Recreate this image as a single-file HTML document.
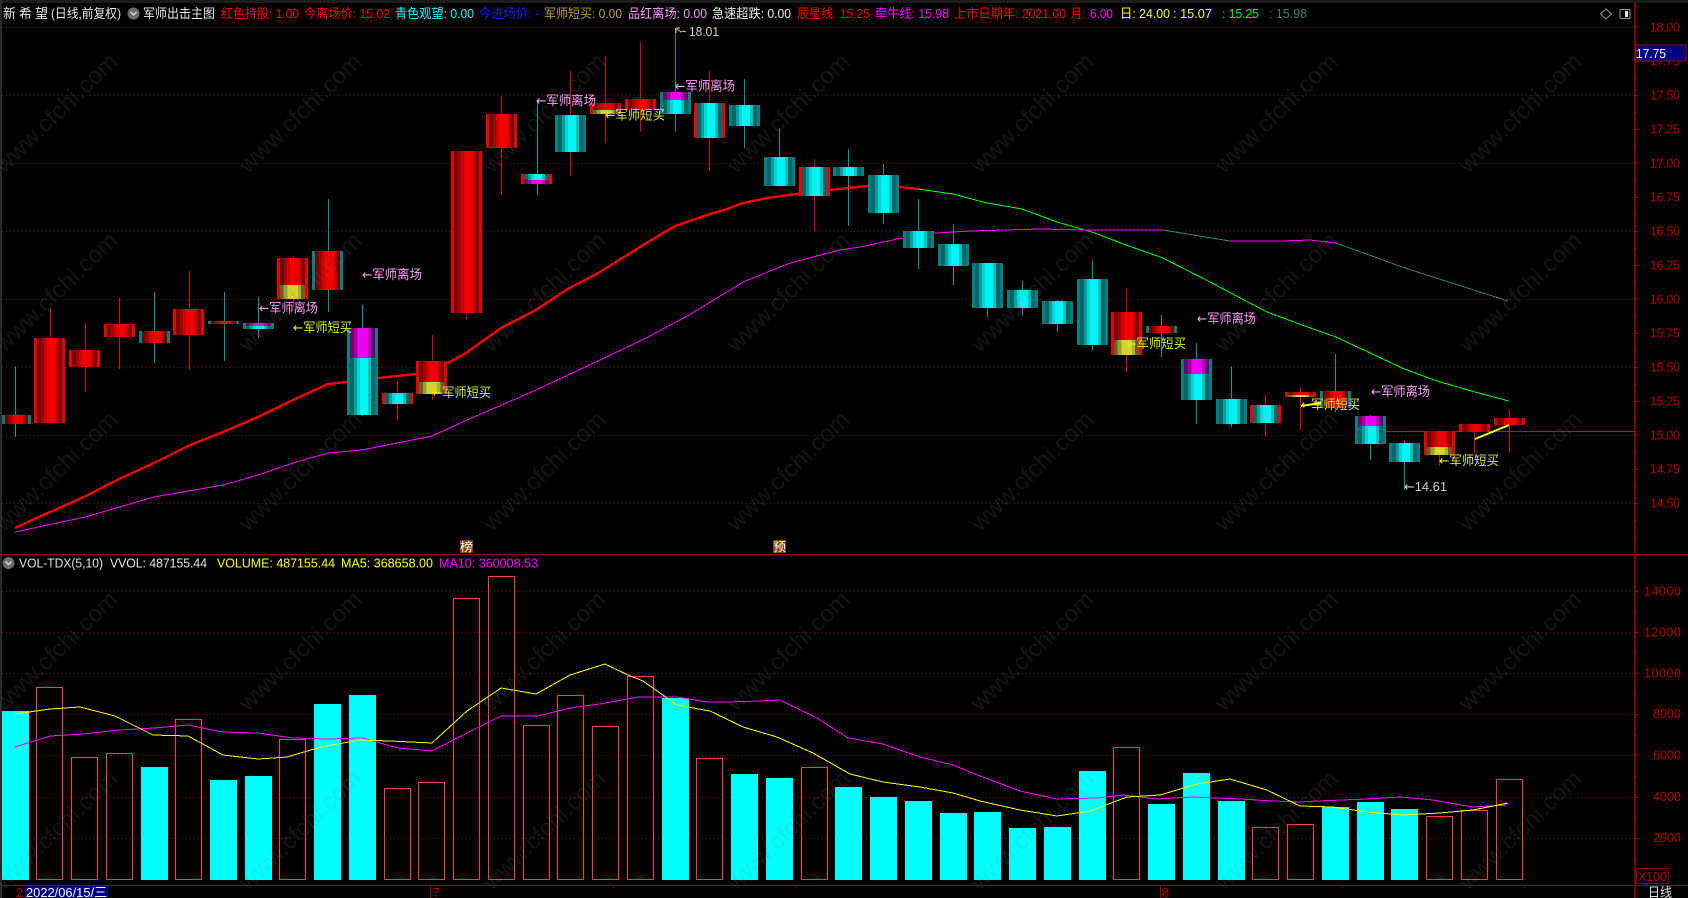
<!DOCTYPE html>
<html lang="zh">
<head>
<meta charset="utf-8">
<title>新希望 日线</title>
<style>
html,body{margin:0;padding:0;background:#000;width:1688px;height:898px;overflow:hidden}
svg{display:block;position:absolute;left:0;top:0}
text{font-family:"Liberation Sans","Noto Sans CJK SC",sans-serif;font-size:13px;white-space:pre}
.ar{font-family:"DejaVu Sans",sans-serif}
.ax{font-size:12.5px;fill:#b80000}
.ml{fill:#ff9cff}
.dl{fill:#d8f030}
.wm{font-size:24px;fill:rgba(128,128,128,.16);text-anchor:middle}
.g{stroke:#a00000;stroke-width:1;stroke-dasharray:1 3;fill:none;shape-rendering:crispEdges}
.l{fill:none;shape-rendering:crispEdges}
.c{fill:#00ffff}
.h{fill:none;stroke:#ff4040;stroke-width:1}
.r{shape-rendering:crispEdges}
</style>
</head>
<body>
<svg width="1688" height="898" viewBox="0 0 1688 898" xmlns="http://www.w3.org/2000/svg">
<defs>
<linearGradient id="gR"><stop offset="0" stop-color="#e80000"/><stop offset=".1" stop-color="#e80000"/><stop offset=".1" stop-color="#700000"/><stop offset=".22" stop-color="#700000"/><stop offset=".22" stop-color="#a00000"/><stop offset=".32" stop-color="#a00000"/><stop offset=".32" stop-color="#d00000"/><stop offset=".42" stop-color="#d00000"/><stop offset=".42" stop-color="#f00000"/><stop offset=".72" stop-color="#f00000"/><stop offset=".72" stop-color="#b00000"/><stop offset=".8" stop-color="#b00000"/><stop offset=".8" stop-color="#700000"/><stop offset=".9" stop-color="#700000"/><stop offset=".9" stop-color="#e80000"/><stop offset="1" stop-color="#e80000"/></linearGradient>
<linearGradient id="gT"><stop offset="0" stop-color="#008080"/><stop offset=".1" stop-color="#008080"/><stop offset=".1" stop-color="#700000"/><stop offset=".22" stop-color="#700000"/><stop offset=".22" stop-color="#a00000"/><stop offset=".32" stop-color="#a00000"/><stop offset=".32" stop-color="#d00000"/><stop offset=".42" stop-color="#d00000"/><stop offset=".42" stop-color="#f00000"/><stop offset=".72" stop-color="#f00000"/><stop offset=".72" stop-color="#b00000"/><stop offset=".8" stop-color="#b00000"/><stop offset=".8" stop-color="#700000"/><stop offset=".9" stop-color="#700000"/><stop offset=".9" stop-color="#008080"/><stop offset="1" stop-color="#008080"/></linearGradient>
<linearGradient id="gC"><stop offset="0" stop-color="#008080"/><stop offset=".1" stop-color="#008080"/><stop offset=".1" stop-color="#006666"/><stop offset=".22" stop-color="#006666"/><stop offset=".22" stop-color="#00a0a0"/><stop offset=".32" stop-color="#00a0a0"/><stop offset=".32" stop-color="#00d8d8"/><stop offset=".42" stop-color="#00d8d8"/><stop offset=".42" stop-color="#00f4f4"/><stop offset=".68" stop-color="#00f4f4"/><stop offset=".68" stop-color="#00c0c0"/><stop offset=".78" stop-color="#00c0c0"/><stop offset=".78" stop-color="#006666"/><stop offset=".9" stop-color="#006666"/><stop offset=".9" stop-color="#008080"/><stop offset="1" stop-color="#008080"/></linearGradient>
<linearGradient id="gX"><stop offset="0" stop-color="#ee0000"/><stop offset=".1" stop-color="#ee0000"/><stop offset=".1" stop-color="#006666"/><stop offset=".22" stop-color="#006666"/><stop offset=".22" stop-color="#00a0a0"/><stop offset=".32" stop-color="#00a0a0"/><stop offset=".32" stop-color="#00d8d8"/><stop offset=".42" stop-color="#00d8d8"/><stop offset=".42" stop-color="#00f4f4"/><stop offset=".68" stop-color="#00f4f4"/><stop offset=".68" stop-color="#00c0c0"/><stop offset=".78" stop-color="#00c0c0"/><stop offset=".78" stop-color="#006666"/><stop offset=".9" stop-color="#006666"/><stop offset=".9" stop-color="#ee0000"/><stop offset="1" stop-color="#ee0000"/></linearGradient>
<linearGradient id="gM"><stop offset="0" stop-color="#700070"/><stop offset=".15" stop-color="#700070"/><stop offset=".15" stop-color="#a000a0"/><stop offset=".3" stop-color="#a000a0"/><stop offset=".3" stop-color="#f000f0"/><stop offset=".72" stop-color="#f000f0"/><stop offset=".72" stop-color="#b000b0"/><stop offset=".85" stop-color="#b000b0"/><stop offset=".85" stop-color="#700070"/><stop offset="1" stop-color="#700070"/></linearGradient>
<linearGradient id="gY"><stop offset="0" stop-color="#606030"/><stop offset=".15" stop-color="#606030"/><stop offset=".15" stop-color="#a0a030"/><stop offset=".3" stop-color="#a0a030"/><stop offset=".3" stop-color="#d4d42c"/><stop offset=".72" stop-color="#d4d42c"/><stop offset=".72" stop-color="#b0b030"/><stop offset=".85" stop-color="#b0b030"/><stop offset=".85" stop-color="#606030"/><stop offset="1" stop-color="#606030"/></linearGradient>
</defs>

<!-- frame -->
<rect x="0" y="0" width="1688" height="3" fill="#1c1c1c"/>
<rect x="0" y="0" width="2" height="898" fill="#2a2a2a"/>

<!-- main grid -->
<path class="g" d="M2 27.5H1634M2 95.5H1634M2 163.5H1634M2 231.5H1634M2 299.5H1634M2 367.5H1634M2 435.5H1634M2 503.5H1634"/>
<!-- volume grid -->
<path class="g" d="M2 591.5H1634M2 632.5H1634M2 673.5H1634M2 714.5H1634M2 755.5H1634M2 797.5H1634M2 838.5H1634"/>

<!-- MA lines main -->
<polyline class="l" stroke="#ff0000" stroke-width="2.4" points="15,528 50,512 84,497 119,479 154,463 188,446 223,432 258,417 293,400 328,384 346,382 378,378 416,374 448,363 466,353 501,328 536,310 566,290 600,272 640,247 675,226 710,214 727,209 743,203 767,198 797,194 830,190 867,186 900,187 918,189"/>
<polyline class="l" stroke="#00ff00" stroke-width="1" points="918,189 953,194 987,203 1022,209 1057,222 1092,232 1126,245 1163,258 1210,282 1267,312 1299,324 1336,337 1366,351 1402,368 1437,381 1475,392 1509,401"/>
<polyline class="l" stroke="#ff00ff" stroke-width="1" points="15,532 85,517 154,497 223,485 258,475 293,463 328,453 362,450 397,443 432,436 467,420 497,407 536,390 600,360 646,338 689,315 743,282 790,263 840,250 860,247 902,238 936,233 970,231 1040,229 1087,230 1163,230"/>
<polyline class="l" stroke="#2e8b57" stroke-width="1" points="1163,230 1230,241"/>
<polyline class="l" stroke="#ff00ff" stroke-width="1" points="1230,241 1283,241 1310,240 1336,243"/>
<polyline class="l" stroke="#2e8b57" stroke-width="1" points="1336,243 1405,268 1508,301"/>

<!-- red 15.00 price line -->
<rect class="r" x="1386" y="431" width="248" height="1" fill="#e00000"/>

<!-- wicks -->
<path class="r" stroke="#e00000" fill="none" d="M50.5 308V338M85.5 323V392M119.5 298V369M189.5 271V370M293.5 256V307M397.5 381V420M432.5 335V400M466.5 151V320M501.5 96V195M570.5 71V176M605.5 56V143M640.5 42V132M709.5 71V171M814.5 159V231M1126.5 288V372M1265.5 395V437M1300.5 387V430M1439.5 430V466M1474.5 424V454M1509.5 410V452"/>
<path class="r" stroke="#009a9a" fill="none" d="M15.5 366V437M154.5 292V363M224.5 292V361M258.5 297V338M328.5 199V312M362.5 305V416M537.5 100V195M675.5 28V132M744.5 79V148M779.5 128V186M848.5 149V226M883.5 164V224M918.5 199V269M953.5 224V285M987.5 263V317M1022.5 281V315M1057.5 300V332M1092.5 260V350M1161.5 315V357M1196.5 343V424M1231.5 366V427M1335.5 354V412M1370.5 415V460M1404.5 441V490"/>

<!-- candle bodies -->
<g class="r">
<rect x="2" y="415" width="29" height="9" fill="url(#gT)"/>
<rect x="34" y="338" width="31" height="85" fill="url(#gR)"/>
<rect x="69" y="350" width="31" height="17" fill="url(#gR)"/>
<rect x="104" y="324" width="31" height="13" fill="url(#gR)"/>
<rect x="139" y="331" width="31" height="12" fill="url(#gT)"/>
<rect x="173" y="309" width="31" height="26" fill="url(#gR)"/>
<rect x="208" y="321" width="31" height="3" fill="url(#gT)"/>
<rect x="243" y="323" width="31" height="6" fill="url(#gC)"/><rect x="246" y="323" width="25" height="3" fill="url(#gM)"/>
<rect x="277" y="258" width="31" height="41" fill="url(#gR)"/><rect x="280" y="285" width="25" height="14" fill="url(#gY)"/>
<rect x="312" y="251" width="31" height="39" fill="url(#gT)"/>
<rect x="347" y="328" width="31" height="87" fill="url(#gC)"/><rect x="350" y="328" width="25" height="30" fill="url(#gM)"/>
<rect x="382" y="393" width="31" height="11" fill="url(#gX)"/>
<rect x="416" y="361" width="31" height="33" fill="url(#gR)"/><rect x="419" y="382" width="25" height="12" fill="url(#gY)"/>
<rect x="451" y="151" width="31" height="162" fill="url(#gR)"/>
<rect x="486" y="114" width="31" height="34" fill="url(#gR)"/>
<rect x="521" y="174" width="31" height="10" fill="url(#gX)"/><rect x="524" y="180" width="25" height="4" fill="url(#gM)"/>
<rect x="555" y="115" width="31" height="37" fill="url(#gC)"/>
<rect x="590" y="103" width="31" height="11" fill="url(#gR)"/><rect x="593" y="110" width="25" height="4" fill="url(#gY)"/>
<rect x="625" y="99" width="31" height="11" fill="url(#gR)"/>
<rect x="660" y="92" width="31" height="22" fill="url(#gC)"/><rect x="663" y="92" width="25" height="8" fill="url(#gM)"/>
<rect x="694" y="103" width="31" height="35" fill="url(#gX)"/>
<rect x="729" y="105" width="31" height="21" fill="url(#gC)"/>
<rect x="764" y="157" width="31" height="29" fill="url(#gC)"/>
<rect x="799" y="167" width="31" height="29" fill="url(#gX)"/>
<rect x="833" y="167" width="31" height="9" fill="url(#gC)"/>
<rect x="868" y="175" width="31" height="38" fill="url(#gC)"/>
<rect x="903" y="231" width="31" height="17" fill="url(#gC)"/>
<rect x="938" y="244" width="31" height="22" fill="url(#gC)"/>
<rect x="972" y="263" width="31" height="45" fill="url(#gC)"/>
<rect x="1007" y="290" width="31" height="18" fill="url(#gC)"/>
<rect x="1042" y="301" width="31" height="23" fill="url(#gC)"/>
<rect x="1077" y="279" width="31" height="66" fill="url(#gC)"/>
<rect x="1111" y="312" width="31" height="43" fill="url(#gR)"/><rect x="1114" y="340" width="25" height="15" fill="url(#gY)"/>
<rect x="1146" y="326" width="31" height="7" fill="url(#gT)"/>
<rect x="1181" y="359" width="31" height="41" fill="url(#gC)"/><rect x="1184" y="359" width="25" height="15" fill="url(#gM)"/>
<rect x="1216" y="399" width="31" height="25" fill="url(#gC)"/>
<rect x="1250" y="405" width="31" height="18" fill="url(#gX)"/>
<rect x="1285" y="392" width="31" height="5" fill="url(#gR)"/><rect x="1288" y="395" width="25" height="2" fill="url(#gY)"/>
<rect x="1320" y="391" width="31" height="17" fill="url(#gT)"/>
<rect x="1355" y="416" width="31" height="28" fill="url(#gC)"/><rect x="1358" y="416" width="25" height="10" fill="url(#gM)"/>
<rect x="1389" y="443" width="31" height="19" fill="url(#gC)"/>
<rect x="1424" y="431" width="31" height="24" fill="url(#gR)"/><rect x="1427" y="447" width="25" height="8" fill="url(#gY)"/>
<rect x="1459" y="424" width="31" height="8" fill="url(#gR)"/>
<rect x="1494" y="418" width="31" height="7" fill="url(#gR)"/>
</g>

<!-- yellow short segments -->
<path d="M1475 439L1509 425" stroke="#ffff00" stroke-width="2" fill="none" class="r"/>
<path d="M1301 406L1321 403" stroke="#ffff00" stroke-width="2" fill="none" class="r"/>

<!-- chart annotations -->
<text class="ml" x="259" y="312.5" textLength="59" lengthAdjust="spacingAndGlyphs"><tspan class="ar">←</tspan>军师离场</text>
<text class="ml" x="362" y="279" textLength="60" lengthAdjust="spacingAndGlyphs"><tspan class="ar">←</tspan>军师离场</text>
<text class="ml" x="536" y="105" textLength="60" lengthAdjust="spacingAndGlyphs"><tspan class="ar">←</tspan>军师离场</text>
<text class="ml" x="675" y="90.5" textLength="60" lengthAdjust="spacingAndGlyphs"><tspan class="ar">←</tspan>军师离场</text>
<text class="ml" x="1197" y="323" textLength="59" lengthAdjust="spacingAndGlyphs"><tspan class="ar">←</tspan>军师离场</text>
<text class="ml" x="1371" y="396" textLength="59" lengthAdjust="spacingAndGlyphs"><tspan class="ar">←</tspan>军师离场</text>
<text class="dl" x="293" y="332" textLength="59" lengthAdjust="spacingAndGlyphs"><tspan class="ar">←</tspan>军师短买</text>
<text class="dl" x="432" y="397" textLength="59" lengthAdjust="spacingAndGlyphs"><tspan class="ar">←</tspan>军师短买</text>
<text class="dl" x="605" y="119.5" textLength="60" lengthAdjust="spacingAndGlyphs"><tspan class="ar">←</tspan>军师短买</text>
<text class="dl" x="1126" y="348" textLength="60" lengthAdjust="spacingAndGlyphs"><tspan class="ar">←</tspan>军师短买</text>
<text class="dl" x="1301" y="409" textLength="59" lengthAdjust="spacingAndGlyphs"><tspan class="ar">←</tspan>军师短买</text>
<text class="dl" x="1439" y="465" textLength="60" lengthAdjust="spacingAndGlyphs"><tspan class="ar">←</tspan>军师短买</text>
<text x="1404" y="491" fill="#d0d0d0" textLength="43" lengthAdjust="spacingAndGlyphs"><tspan class="ar">←</tspan>14.61</text>
<path d="M676 28h4M676 28v5M677 29l4 3 2-1 3 1" stroke="#c8c8c8" fill="none"/>
<text x="689" y="36" fill="#d0d0d0" textLength="30" lengthAdjust="spacingAndGlyphs">18.01</text>

<!-- top legend -->
<text x="3" y="18" fill="#e8e8e8" textLength="45" lengthAdjust="spacing">新 希 望</text>
<text x="51" y="18" fill="#e8e8e8" textLength="70" lengthAdjust="spacingAndGlyphs">(日线,前复权)</text>
<circle cx="133.500" cy="13.500" r="6" fill="#6e6e6e"/><path d="M130.500 12l3 3 3-3" stroke="#e0e0e0" stroke-width="1.300" fill="none"/>
<text x="143" y="18" fill="#e8e8e8" textLength="72" lengthAdjust="spacingAndGlyphs">军师出击主图</text>
<text x="221" y="18" fill="#ff0000" textLength="78" lengthAdjust="spacingAndGlyphs">红色持股: 1.00</text>
<text x="304" y="18" fill="#ff0000" textLength="86" lengthAdjust="spacingAndGlyphs">今离场价: 15.02</text>
<text x="395" y="18" fill="#00ffff" textLength="79" lengthAdjust="spacingAndGlyphs">青色观望: 0.00</text>
<text x="479" y="18" fill="#1a1aff" textLength="60" lengthAdjust="spacingAndGlyphs">今进场价: -</text>
<text x="544" y="18" fill="#b8a030" textLength="78" lengthAdjust="spacingAndGlyphs">军师短买: 0.00</text>
<text x="628" y="18" fill="#ff99ff" textLength="79" lengthAdjust="spacingAndGlyphs">品红离场: 0.00</text>
<text x="712" y="18" fill="#f0f0f0" textLength="79" lengthAdjust="spacingAndGlyphs">急速超跌: 0.00</text>
<text x="797" y="18" fill="#ff0000" textLength="73" lengthAdjust="spacingAndGlyphs">辰星线: 15.25</text>
<text x="875" y="18" fill="#ff00ff" textLength="74" lengthAdjust="spacingAndGlyphs">牵牛线: 15.98</text>
<text x="954" y="18" fill="#ff0000" textLength="112" lengthAdjust="spacingAndGlyphs">上市日期年: 2021.00</text>
<text x="1071" y="18" fill="#ff0000" textLength="14" lengthAdjust="spacingAndGlyphs">月:</text>
<text x="1090" y="18" fill="#ff00ff" textLength="23" lengthAdjust="spacingAndGlyphs">6.00</text>
<text x="1120" y="18" fill="#ffff00" textLength="50" lengthAdjust="spacingAndGlyphs">日: 24.00</text>
<text x="1173" y="18" fill="#ffff00" textLength="39" lengthAdjust="spacingAndGlyphs">: 15.07</text>
<text x="1222" y="18" fill="#00ff00" textLength="37" lengthAdjust="spacingAndGlyphs">: 15.25</text>
<text x="1269" y="18" fill="#2e8b57" textLength="38" lengthAdjust="spacingAndGlyphs">: 15.98</text>

<!-- top-right icons -->
<path d="M1606 9l5.500 5-5.500 5-5.500-5z" fill="none" stroke="#9a9a9a"/>
<rect x="1620" y="9.500" width="10" height="9" rx="1.500" fill="none" stroke="#9a9a9a"/>
<rect x="1625" y="11" width="3" height="6" fill="#e0e0e0"/>

<!-- volume bars -->
<g class="r">
<rect class="c" x="2" y="711" width="27" height="169"/>
<rect class="h" x="36.500" y="687.500" width="26" height="192"/>
<rect class="h" x="71.500" y="757.500" width="26" height="122"/>
<rect class="h" x="106.500" y="753.500" width="26" height="126"/>
<rect class="c" x="141" y="767" width="27" height="113"/>
<rect class="h" x="175.500" y="719.500" width="26" height="160"/>
<rect class="c" x="210" y="780" width="27" height="100"/>
<rect class="c" x="245" y="776" width="27" height="104"/>
<rect class="h" x="279.500" y="739.500" width="26" height="140"/>
<rect class="c" x="314" y="704" width="27" height="176"/>
<rect class="c" x="349" y="695" width="27" height="185"/>
<rect class="h" x="384.500" y="788.500" width="26" height="91"/>
<rect class="h" x="418.500" y="782.500" width="26" height="97"/>
<rect class="h" x="453.500" y="598.500" width="26" height="281"/>
<rect class="h" x="488.500" y="576.500" width="26" height="303"/>
<rect class="h" x="523.500" y="725.500" width="26" height="154"/>
<rect class="h" x="557.500" y="695.500" width="26" height="184"/>
<rect class="h" x="592.500" y="726.500" width="26" height="153"/>
<rect class="h" x="627.500" y="676.500" width="26" height="203"/>
<rect class="c" x="662" y="698" width="27" height="182"/>
<rect class="h" x="696.500" y="758.500" width="26" height="121"/>
<rect class="c" x="731" y="774" width="27" height="106"/>
<rect class="c" x="766" y="778" width="27" height="102"/>
<rect class="h" x="801.500" y="767.500" width="26" height="112"/>
<rect class="c" x="835" y="787" width="27" height="93"/>
<rect class="c" x="870" y="797" width="27" height="83"/>
<rect class="c" x="905" y="801" width="27" height="79"/>
<rect class="c" x="940" y="813" width="27" height="67"/>
<rect class="c" x="974" y="812" width="27" height="68"/>
<rect class="c" x="1009" y="828" width="27" height="52"/>
<rect class="c" x="1044" y="827" width="27" height="53"/>
<rect class="c" x="1079" y="771" width="27" height="109"/>
<rect class="h" x="1113.500" y="747.500" width="26" height="132"/>
<rect class="c" x="1148" y="804" width="27" height="76"/>
<rect class="c" x="1183" y="773" width="27" height="107"/>
<rect class="c" x="1218" y="801" width="27" height="79"/>
<rect class="h" x="1252.500" y="827.500" width="26" height="52"/>
<rect class="h" x="1287.500" y="824.500" width="26" height="55"/>
<rect class="c" x="1322" y="807" width="27" height="73"/>
<rect class="c" x="1357" y="802" width="27" height="78"/>
<rect class="c" x="1391" y="809" width="27" height="71"/>
<rect class="h" x="1426.500" y="816.500" width="26" height="63"/>
<rect class="h" x="1461.500" y="810.500" width="26" height="69"/>
<rect class="h" x="1496.500" y="779.500" width="26" height="100"/>
</g>

<!-- volume MA lines -->
<polyline class="l" stroke="#ff00ff" stroke-width="1" points="15,747 50,736 84,734 119,730 154,728 188,725 222,732 258,733 293,738 328,739 362,738 398,748 432,751 467,733 501,716 538,716 570,708 600,704 638,697 677,697 707,702 727,702 760,701 780,700 817,718 848,738 883,744 920,757 953,765 980,776 1020,791 1057,799 1097,798 1123,795 1157,799 1193,797 1240,799 1273,801 1300,802 1318,801 1342,800 1367,799 1400,797 1433,800 1473,807 1507,805"/>
<polyline class="l" stroke="#ffff00" stroke-width="1" points="15,714 50,709 80,707 115,716 153,735 188,736 223,755 258,759 287,757 321,747 360,740 390,741 432,743 467,711 501,688 536,694 570,675 605,664 628,675 643,681 677,705 710,711 743,727 777,737 813,753 850,774 883,782 920,787 953,793 980,801 1020,810 1057,816 1090,811 1127,797 1160,795 1197,784 1230,779 1267,790 1300,806 1333,807 1367,812 1403,815 1440,813 1473,810 1508,803"/>

<!-- marks -->
<rect x="460" y="540" width="13" height="13" fill="#7a3e08"/>
<text x="460" y="551" fill="#ffffff" style="font-size:12px" textLength="13" lengthAdjust="spacingAndGlyphs">榜</text>
<rect x="773" y="540" width="13" height="13" fill="#7a3e08"/>
<text x="773" y="551" fill="#ffffff" style="font-size:12px" textLength="13" lengthAdjust="spacingAndGlyphs">预</text>

<!-- separators -->
<rect x="0" y="554" width="1688" height="1" fill="#a00000"/>
<rect x="0" y="885" width="1688" height="1" fill="#800000"/>
<rect x="1634" y="3" width="2" height="895" fill="#800000"/>

<!-- volume legend -->
<circle cx="8.500" cy="563" r="6" fill="#6e6e6e"/><path d="M5.500 561.500l3 3 3-3" stroke="#e0e0e0" stroke-width="1.300" fill="none"/>
<text x="19" y="567.500" fill="#e0e0e0" textLength="84" lengthAdjust="spacingAndGlyphs">VOL-TDX(5,10)</text>
<text x="110" y="567.500" fill="#e8e8e8" textLength="97" lengthAdjust="spacingAndGlyphs">VVOL: 487155.44</text>
<text x="217" y="567.500" fill="#ffff00" textLength="118" lengthAdjust="spacingAndGlyphs">VOLUME: 487155.44</text>
<text x="341" y="567.500" fill="#ffff00" textLength="92" lengthAdjust="spacingAndGlyphs">MA5: 368658.00</text>
<text x="439" y="567.500" fill="#ff00ff" textLength="99" lengthAdjust="spacingAndGlyphs">MA10: 360008.53</text>

<!-- price axis -->
<path class="r" stroke="#a00000" fill="none" d="M1634 27.500h5M1634 44.500h3M1634 61.500h5M1634 78.500h3M1634 95.500h5M1634 112.500h3M1634 129.500h5M1634 146.500h3M1634 163.500h5M1634 180.500h3M1634 197.500h5M1634 214.500h3M1634 231.500h5M1634 248.500h3M1634 265.500h5M1634 282.500h3M1634 299.500h5M1634 316.500h3M1634 333.500h5M1634 350.500h3M1634 367.500h5M1634 384.500h3M1634 401.500h5M1634 418.500h3M1634 435.500h5M1634 452.500h3M1634 469.500h5M1634 486.500h3M1634 503.500h5M1634 520.500h3M1634 537.500h3M1634 591.500h5M1634 611.500h3M1634 632.500h5M1634 652.500h3M1634 673.500h5M1634 693.500h3M1634 714.500h5M1634 735.500h3M1634 755.500h5M1634 776.500h3M1634 797.500h5M1634 817.500h3M1634 838.500h5M1634 859.500h3"/>
<g class="ax">
<text class="ax" x="1650" y="31.500" textLength="30">18.00</text>
<text class="ax" x="1650" y="65.500" textLength="30">17.75</text>
<text class="ax" x="1650" y="99.500" textLength="30">17.50</text>
<text class="ax" x="1650" y="133.500" textLength="30">17.25</text>
<text class="ax" x="1650" y="167.500" textLength="30">17.00</text>
<text class="ax" x="1650" y="201.500" textLength="30">16.75</text>
<text class="ax" x="1650" y="235.500" textLength="30">16.50</text>
<text class="ax" x="1650" y="269.500" textLength="30">16.25</text>
<text class="ax" x="1650" y="303.500" textLength="30">16.00</text>
<text class="ax" x="1650" y="337.500" textLength="30">15.75</text>
<text class="ax" x="1650" y="371.500" textLength="30">15.50</text>
<text class="ax" x="1650" y="405.500" textLength="30">15.25</text>
<text class="ax" x="1650" y="439.500" textLength="30">15.00</text>
<text class="ax" x="1650" y="473.500" textLength="30">14.75</text>
<text class="ax" x="1650" y="507.500" textLength="30">14.50</text>
<text class="ax" x="1644" y="595.500" textLength="37">14000</text>
<text class="ax" x="1644" y="636.500" textLength="37">12000</text>
<text class="ax" x="1644" y="677.500" textLength="37">10000</text>
<text class="ax" x="1653" y="718" textLength="28">8000</text>
<text class="ax" x="1653" y="759.500" textLength="28">6000</text>
<text class="ax" x="1653" y="801" textLength="28">4000</text>
<text class="ax" x="1653" y="842" textLength="28">2000</text>
</g>

<!-- current price tag -->
<rect x="1636" y="45" width="50" height="16" fill="#000080" stroke="#a00000" stroke-width="1"/>
<text x="1636" y="58" fill="#ffffff" textLength="30" lengthAdjust="spacingAndGlyphs">17.75</text>

<!-- X100 box -->
<rect x="1636.500" y="868.500" width="32" height="15" fill="#000" stroke="#800000"/>
<text x="1638" y="881" fill="#c00000" style="font-size:12.500px" textLength="29" lengthAdjust="spacingAndGlyphs">X100</text>

<!-- bottom axis -->
<path class="r" stroke="#800000" fill="none" d="M613.500 885v3M795.500 885v3M977.500 885v3M1342.500 885v3M1524.500 885v3"/>
<text x="16" y="897" fill="#b40000">2</text>
<rect x="430" y="886" width="1" height="12" fill="#a00000"/>
<text x="433" y="897" fill="#b40000">7</text>
<rect x="1160" y="886" width="1" height="12" fill="#a00000"/>
<text x="1162" y="897" fill="#b40000">8</text>
<rect x="25" y="886" width="83" height="12" fill="#000080"/>
<text x="26" y="897" fill="#ffffff" textLength="81" lengthAdjust="spacingAndGlyphs">2022/06/15/三</text>
<text x="1648" y="897" fill="#e0e0e0" textLength="24" lengthAdjust="spacingAndGlyphs">日线</text>

<!-- watermark -->
<g>
<text class="wm" x="56" y="113" textLength="160" lengthAdjust="spacingAndGlyphs" transform="rotate(-44 56 113)" dy="8">www.cfchi.com</text>
<text class="wm" x="300" y="113" textLength="160" lengthAdjust="spacingAndGlyphs" transform="rotate(-44 300 113)" dy="8">www.cfchi.com</text>
<text class="wm" x="544" y="113" textLength="160" lengthAdjust="spacingAndGlyphs" transform="rotate(-44 544 113)" dy="8">www.cfchi.com</text>
<text class="wm" x="788" y="113" textLength="160" lengthAdjust="spacingAndGlyphs" transform="rotate(-44 788 113)" dy="8">www.cfchi.com</text>
<text class="wm" x="1032" y="113" textLength="160" lengthAdjust="spacingAndGlyphs" transform="rotate(-44 1032 113)" dy="8">www.cfchi.com</text>
<text class="wm" x="1276" y="113" textLength="160" lengthAdjust="spacingAndGlyphs" transform="rotate(-44 1276 113)" dy="8">www.cfchi.com</text>
<text class="wm" x="1520" y="113" textLength="160" lengthAdjust="spacingAndGlyphs" transform="rotate(-44 1520 113)" dy="8">www.cfchi.com</text>
<text class="wm" x="56" y="292" textLength="160" lengthAdjust="spacingAndGlyphs" transform="rotate(-44 56 292)" dy="8">www.cfchi.com</text>
<text class="wm" x="300" y="292" textLength="160" lengthAdjust="spacingAndGlyphs" transform="rotate(-44 300 292)" dy="8">www.cfchi.com</text>
<text class="wm" x="544" y="292" textLength="160" lengthAdjust="spacingAndGlyphs" transform="rotate(-44 544 292)" dy="8">www.cfchi.com</text>
<text class="wm" x="788" y="292" textLength="160" lengthAdjust="spacingAndGlyphs" transform="rotate(-44 788 292)" dy="8">www.cfchi.com</text>
<text class="wm" x="1032" y="292" textLength="160" lengthAdjust="spacingAndGlyphs" transform="rotate(-44 1032 292)" dy="8">www.cfchi.com</text>
<text class="wm" x="1276" y="292" textLength="160" lengthAdjust="spacingAndGlyphs" transform="rotate(-44 1276 292)" dy="8">www.cfchi.com</text>
<text class="wm" x="1520" y="292" textLength="160" lengthAdjust="spacingAndGlyphs" transform="rotate(-44 1520 292)" dy="8">www.cfchi.com</text>
<text class="wm" x="56" y="471" textLength="160" lengthAdjust="spacingAndGlyphs" transform="rotate(-44 56 471)" dy="8">www.cfchi.com</text>
<text class="wm" x="300" y="471" textLength="160" lengthAdjust="spacingAndGlyphs" transform="rotate(-44 300 471)" dy="8">www.cfchi.com</text>
<text class="wm" x="544" y="471" textLength="160" lengthAdjust="spacingAndGlyphs" transform="rotate(-44 544 471)" dy="8">www.cfchi.com</text>
<text class="wm" x="788" y="471" textLength="160" lengthAdjust="spacingAndGlyphs" transform="rotate(-44 788 471)" dy="8">www.cfchi.com</text>
<text class="wm" x="1032" y="471" textLength="160" lengthAdjust="spacingAndGlyphs" transform="rotate(-44 1032 471)" dy="8">www.cfchi.com</text>
<text class="wm" x="1276" y="471" textLength="160" lengthAdjust="spacingAndGlyphs" transform="rotate(-44 1276 471)" dy="8">www.cfchi.com</text>
<text class="wm" x="1520" y="471" textLength="160" lengthAdjust="spacingAndGlyphs" transform="rotate(-44 1520 471)" dy="8">www.cfchi.com</text>
<text class="wm" x="56" y="651" textLength="160" lengthAdjust="spacingAndGlyphs" transform="rotate(-44 56 651)" dy="8">www.cfchi.com</text>
<text class="wm" x="300" y="651" textLength="160" lengthAdjust="spacingAndGlyphs" transform="rotate(-44 300 651)" dy="8">www.cfchi.com</text>
<text class="wm" x="544" y="651" textLength="160" lengthAdjust="spacingAndGlyphs" transform="rotate(-44 544 651)" dy="8">www.cfchi.com</text>
<text class="wm" x="788" y="651" textLength="160" lengthAdjust="spacingAndGlyphs" transform="rotate(-44 788 651)" dy="8">www.cfchi.com</text>
<text class="wm" x="1032" y="651" textLength="160" lengthAdjust="spacingAndGlyphs" transform="rotate(-44 1032 651)" dy="8">www.cfchi.com</text>
<text class="wm" x="1276" y="651" textLength="160" lengthAdjust="spacingAndGlyphs" transform="rotate(-44 1276 651)" dy="8">www.cfchi.com</text>
<text class="wm" x="1520" y="651" textLength="160" lengthAdjust="spacingAndGlyphs" transform="rotate(-44 1520 651)" dy="8">www.cfchi.com</text>
<text class="wm" x="56" y="830" textLength="160" lengthAdjust="spacingAndGlyphs" transform="rotate(-44 56 830)" dy="8">www.cfchi.com</text>
<text class="wm" x="300" y="830" textLength="160" lengthAdjust="spacingAndGlyphs" transform="rotate(-44 300 830)" dy="8">www.cfchi.com</text>
<text class="wm" x="544" y="830" textLength="160" lengthAdjust="spacingAndGlyphs" transform="rotate(-44 544 830)" dy="8">www.cfchi.com</text>
<text class="wm" x="788" y="830" textLength="160" lengthAdjust="spacingAndGlyphs" transform="rotate(-44 788 830)" dy="8">www.cfchi.com</text>
<text class="wm" x="1032" y="830" textLength="160" lengthAdjust="spacingAndGlyphs" transform="rotate(-44 1032 830)" dy="8">www.cfchi.com</text>
<text class="wm" x="1276" y="830" textLength="160" lengthAdjust="spacingAndGlyphs" transform="rotate(-44 1276 830)" dy="8">www.cfchi.com</text>
<text class="wm" x="1520" y="830" textLength="160" lengthAdjust="spacingAndGlyphs" transform="rotate(-44 1520 830)" dy="8">www.cfchi.com</text>
</g>
</svg>
</body>
</html>
